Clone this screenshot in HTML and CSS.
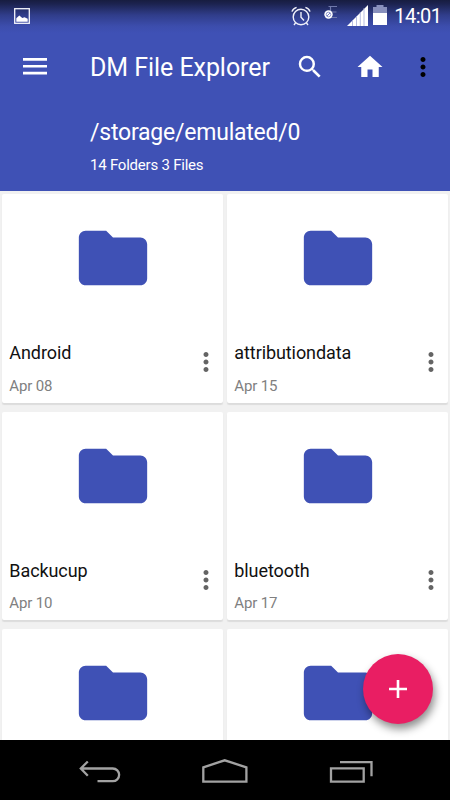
FILE: index.html
```html
<!DOCTYPE html>
<html lang="en">
<head>
<meta charset="utf-8">
<title>DM File Explorer</title>
<link rel="stylesheet" href="styles.css">
</head>
<body>
<svg class="defs" width="0" height="0">
  <symbol id="folder" viewBox="0 0 24 24"><path d="M10 4H4c-1.1 0-2 .9-2 2v12c0 1.1.9 2 2 2h16c1.100 0 2-.9 2-2V8c0-1.100-.9-2-2-2h-8l-2-2z"/></symbol>
  <symbol id="dots" viewBox="0 0 24 24"><path d="M12 8c1.100 0 2-.9 2-2s-.9-2-2-2-2 .9-2 2 .9 2 2 2zm0 2c-1.100 0-2 .9-2 2s.9 2 2 2 2-.9 2-2-.9-2-2-2zm0 6c-1.100 0-2 .9-2 2s.9 2 2 2 2-.9 2-2-.9-2-2-2z"/></symbol>
</svg>
<div class="screen">
  <header class="header">
    <div class="status">
      <svg class="st-image" viewBox="0 0 16 16"><rect x=".7" y=".7" width="14.6" height="14.600" fill="none" stroke="#f4f5fb" stroke-width="1.3"/><path d="M2.300 13.800V10.200L5.300 7.500l3 2.500 2.200-.8 3.200 1.600v3z" fill="#fff"/></svg>
      <svg class="st-alarm" viewBox="0 0 20 20" fill="none" stroke="#f0f1fa" stroke-width="1.400"><circle cx="10" cy="11" r="7.800"/><path d="M10 6v5.300l3 3.200M1 5.600Q2 2.500 5.600 1.400M19 5.600Q18 2.500 14.400 1.400M4.600 16.800L3 19M15.400 16.800L17 19"/></svg>
      <svg class="st-edge" viewBox="0 0 14 15"><path d="M13 1.500H4.500M6.500 1.500V12.500H13M6.500 7H12.500" fill="none" stroke="#7079ab" stroke-width="1.200"/><circle cx="4.500" cy="9.500" r="4.200" fill="#fff"/><circle cx="4.500" cy="9.500" r="2.300" fill="none" stroke="#6d78c0" stroke-width=".7"/><path d="M3 11L6 8" stroke="#5562b5" stroke-width=".8"/></svg>
      <svg class="st-signal" viewBox="0 0 21 21"><path d="M0 21L21 0V21z" fill="#fff"/><path d="M5.500 15v6M9.500 11v10M13.300 7v14M17 3v18" stroke="#a5acd9" stroke-width=".8"/></svg>
      <svg class="st-battery" viewBox="0 0 14 20"><path d="M3.500 0h7v2H14v7H0V2h3.500z" fill="#8890bd"/><path d="M0 8h14v12H0z" fill="#fff"/></svg>
      <span class="clock">14:01</span>
    </div>
    <div class="toolbar">
      <svg class="menu" viewBox="0 0 24 17"><path d="M0 0h24v2.700H0zM0 6.900h24v2.700H0zM0 13.800h24v2.700H0z" fill="#fff"/></svg>
      <h1 class="title">DM File Explorer</h1>
      <div class="actions">
        <svg class="action" viewBox="0 0 24 24"><path d="M15.500 14h-.79l-.28-.27A6.471 6.471 0 0 0 16 9.500 6.500 6.500 0 1 0 9.500 16c1.610 0 3.090-.59 4.230-1.570l.27.28v.79l5 4.990L20.490 19l-4.990-5zm-6 0C7.010 14 5 11.990 5 9.500S7.010 5 9.500 5 14 7.010 14 9.500 11.990 14 9.500 14z"/></svg>
        <svg class="action" viewBox="0 0 24 24"><path d="M10 20v-6h4v6h5v-8h3L12 3 2 12h3v8z"/></svg>
        <svg class="action overflow"><use href="#dots"/></svg>
      </div>
    </div>
    <div class="path">/storage/emulated/0</div>
    <div class="summary">14 Folders 3 Files</div>
  </header>
  <main class="grid">
    <article class="card"><svg class="folder"><use href="#folder"/></svg><div class="info"><div><div class="name">Android</div><div class="date">Apr 08</div></div><svg class="more"><use href="#dots"/></svg></div></article>
    <article class="card"><svg class="folder"><use href="#folder"/></svg><div class="info"><div><div class="name">attributiondata</div><div class="date">Apr 15</div></div><svg class="more"><use href="#dots"/></svg></div></article>
    <article class="card"><svg class="folder"><use href="#folder"/></svg><div class="info"><div><div class="name">Backucup</div><div class="date">Apr 10</div></div><svg class="more"><use href="#dots"/></svg></div></article>
    <article class="card"><svg class="folder"><use href="#folder"/></svg><div class="info"><div><div class="name">bluetooth</div><div class="date">Apr 17</div></div><svg class="more"><use href="#dots"/></svg></div></article>
    <article class="card"><svg class="folder"><use href="#folder"/></svg></article>
    <article class="card"><svg class="folder"><use href="#folder"/></svg></article>
    <div class="fab"><svg viewBox="0 0 18 18"><path d="M9 0v18M0 9h18" stroke="#fff" stroke-width="2.600"/></svg></div>
  </main>
  <nav class="nav">
    <svg viewBox="0 0 60 30"><path d="M10.500 13.500H42.800a6.300 6.300 0 0 1 0 12.700H27.500M17.800 6.500L10.800 13.500L17.800 20.800"/></svg>
    <svg viewBox="0 0 60 30"><path d="M8.300 26.600V12.300L29.700 5.300L51.400 12.300V26.600z"/></svg>
    <svg viewBox="0 0 60 30"><path d="M11 13.300H43.700V26.700H11zM20 7.200H51.500V21.200"/></svg>
  </nav>
</div>
</body>
</html>
```

FILE: styles.css
```css
* { box-sizing: border-box; }
body { margin: 0; font-family: Roboto, "Noto Sans", sans-serif; background: #000; }
svg { display: block; flex: none; }
.defs { position: absolute; }
.screen { width: 450px; height: 800px; display: flex; flex-direction: column; overflow: hidden; }

.header {
  height: 191px;
  flex: none;
  color: #fff;
  background: linear-gradient(#171d40 0, #1c2350 4px, #303d8a 15px, #3c4dac 26px, #3f51b5 33px);
}
.status { height: 32px; display: flex; align-items: flex-start; padding-left: 14.300px; }
.st-image { width: 16px; height: 16px; margin-top: 8px; }
.st-alarm { width: 20px; height: 20px; margin: 6px 0 0 261px; }
.st-edge { width: 14px; height: 15px; margin: 5px 0 0 12.500px; }
.st-signal { width: 21px; height: 21px; margin: 5px 0 0 9.500px; }
.st-battery { width: 14px; height: 20px; margin: 5px 0 0 5px; }
.clock { margin-left: 7px; font-size: 20px; line-height: 33px; letter-spacing: -.5px; white-space: nowrap; }

.toolbar { height: 70px; display: flex; align-items: center; padding-left: 23px; }
.menu { width: 24px; height: 17px; margin-top: -1px; }
.title { margin: 2px 0 0 43px; width: 205px; font-size: 25px; line-height: 30px; font-weight: 400; letter-spacing: -.06px; white-space: nowrap; }
.actions { display: flex; gap: 30px; }
.action { width: 30px; height: 30px; fill: #fff; }
.overflow { fill: #000; margin-left: -7.500px; }
.path { margin: 16px 0 0 90px; font-size: 23px; line-height: 30px; letter-spacing: -.22px; }
.summary { margin: 8px 0 0 90px; font-size: 15px; line-height: 18px; letter-spacing: -.22px; }

.grid {
  position: relative;
  height: 549px;
  flex: none;
  overflow: hidden;
  display: grid;
  grid-template-columns: 221px 221px;
  grid-auto-rows: 208.500px;
  gap: 9px 4px;
  padding: 3px 2px;
  background: #f1f1f1;
}
.card { background: #fff; border-radius: 2px; box-shadow: 0 2px 1px #dcdcdc; padding-top: 23.400px; }
.folder { width: 82px; height: 82px; margin: 0 auto; fill: #3f51b5; }
.info { display: flex; justify-content: space-between; margin-top: 42px; padding-left: 7.300px; }
.name { font-size: 18px; line-height: 24px; letter-spacing: -.08px; color: #111; }
.date { font-size: 15px; line-height: 20px; margin-top: 10.200px; letter-spacing: -.15px; color: #808080; }
.more { width: 30px; height: 30px; margin: 6px 2.300px 0 0; fill: #646464; }

.fab {
  position: absolute;
  right: 16.700px;
  bottom: 16px;
  width: 70px;
  height: 70px;
  border-radius: 50%;
  background: #e91e63;
  box-shadow: 2px 5px 8px rgba(0, 0, 0, .45);
  display: flex;
  align-items: center;
  justify-content: center;
}
.fab svg { width: 18px; height: 18px; }

.nav { height: 60px; background: #000; display: flex; justify-content: center; gap: 65px; padding-top: 15px; }
.nav svg { width: 60px; height: 30px; fill: none; stroke: #a2a2a2; stroke-width: 2.300; }
```
